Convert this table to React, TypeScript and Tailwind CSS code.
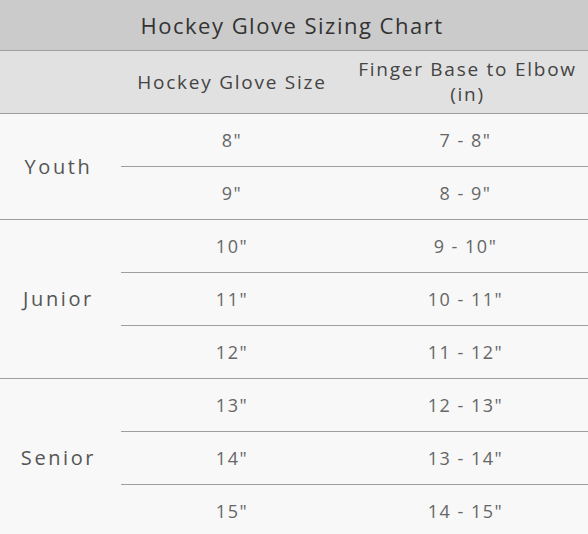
import React from "react";

const groups = [
  { name: "Youth", rows: [["8\"", "7 - 8\""], ["9\"", "8 - 9\""]] },
  { name: "Junior", rows: [["10\"", "9 - 10\""], ["11\"", "10 - 11\""], ["12\"", "11 - 12\""]] },
  { name: "Senior", rows: [["13\"", "12 - 13\""], ["14\"", "13 - 14\""], ["15\"", "14 - 15\""]] },
];

export default function App() {
  return (
    <div className="w-[588px] h-[534px] overflow-hidden bg-[#f8f8f8]" style={{ fontFamily: '"Open Sans", sans-serif' }}>
      <div className="h-[51px] bg-[#cbcbcb] border-b border-[#9e9e9e] flex items-center justify-center pr-[4px] text-[22px] tracking-[1.5px] text-[#333]">
        Hockey Glove Sizing Chart
      </div>
      <div className="h-[63px] bg-[#e1e1e1] border-b border-[#9e9e9e] flex text-[19px] tracking-[1.75px] text-[#444]">
        <div className="w-[121px]" />
        <div className="w-[222px] flex items-center justify-center">Hockey Glove Size</div>
        <div className="flex-1 flex items-center justify-center text-center leading-[25px] pl-[6px] pr-[2px]">
          Finger Base to Elbow (in)
        </div>
      </div>
      {groups.map((g, gi) => (
        <div key={g.name} className={`flex ${gi < groups.length - 1 ? "border-b border-[#9e9e9e]" : ""}`}>
          <div className="w-[121px] pr-[4px] flex items-center justify-center text-[20px] tracking-[2.6px] text-[#555]">
            {g.name}
          </div>
          <div className="flex-1 flex flex-col">
            {g.rows.map((r, ri) => (
              <div
                key={ri}
                className={`flex text-[18px] tracking-[1.5px] text-[#666] ${ri < g.rows.length - 1 ? "h-[53px] border-b border-[#9e9e9e]" : "h-[52px]"}`}
              >
                <div className="w-[222px] flex items-center justify-center">{r[0]}</div>
                <div className="flex-1 flex items-center justify-center">{r[1]}</div>
              </div>
            ))}
          </div>
        </div>
      ))}
    </div>
  );
}
